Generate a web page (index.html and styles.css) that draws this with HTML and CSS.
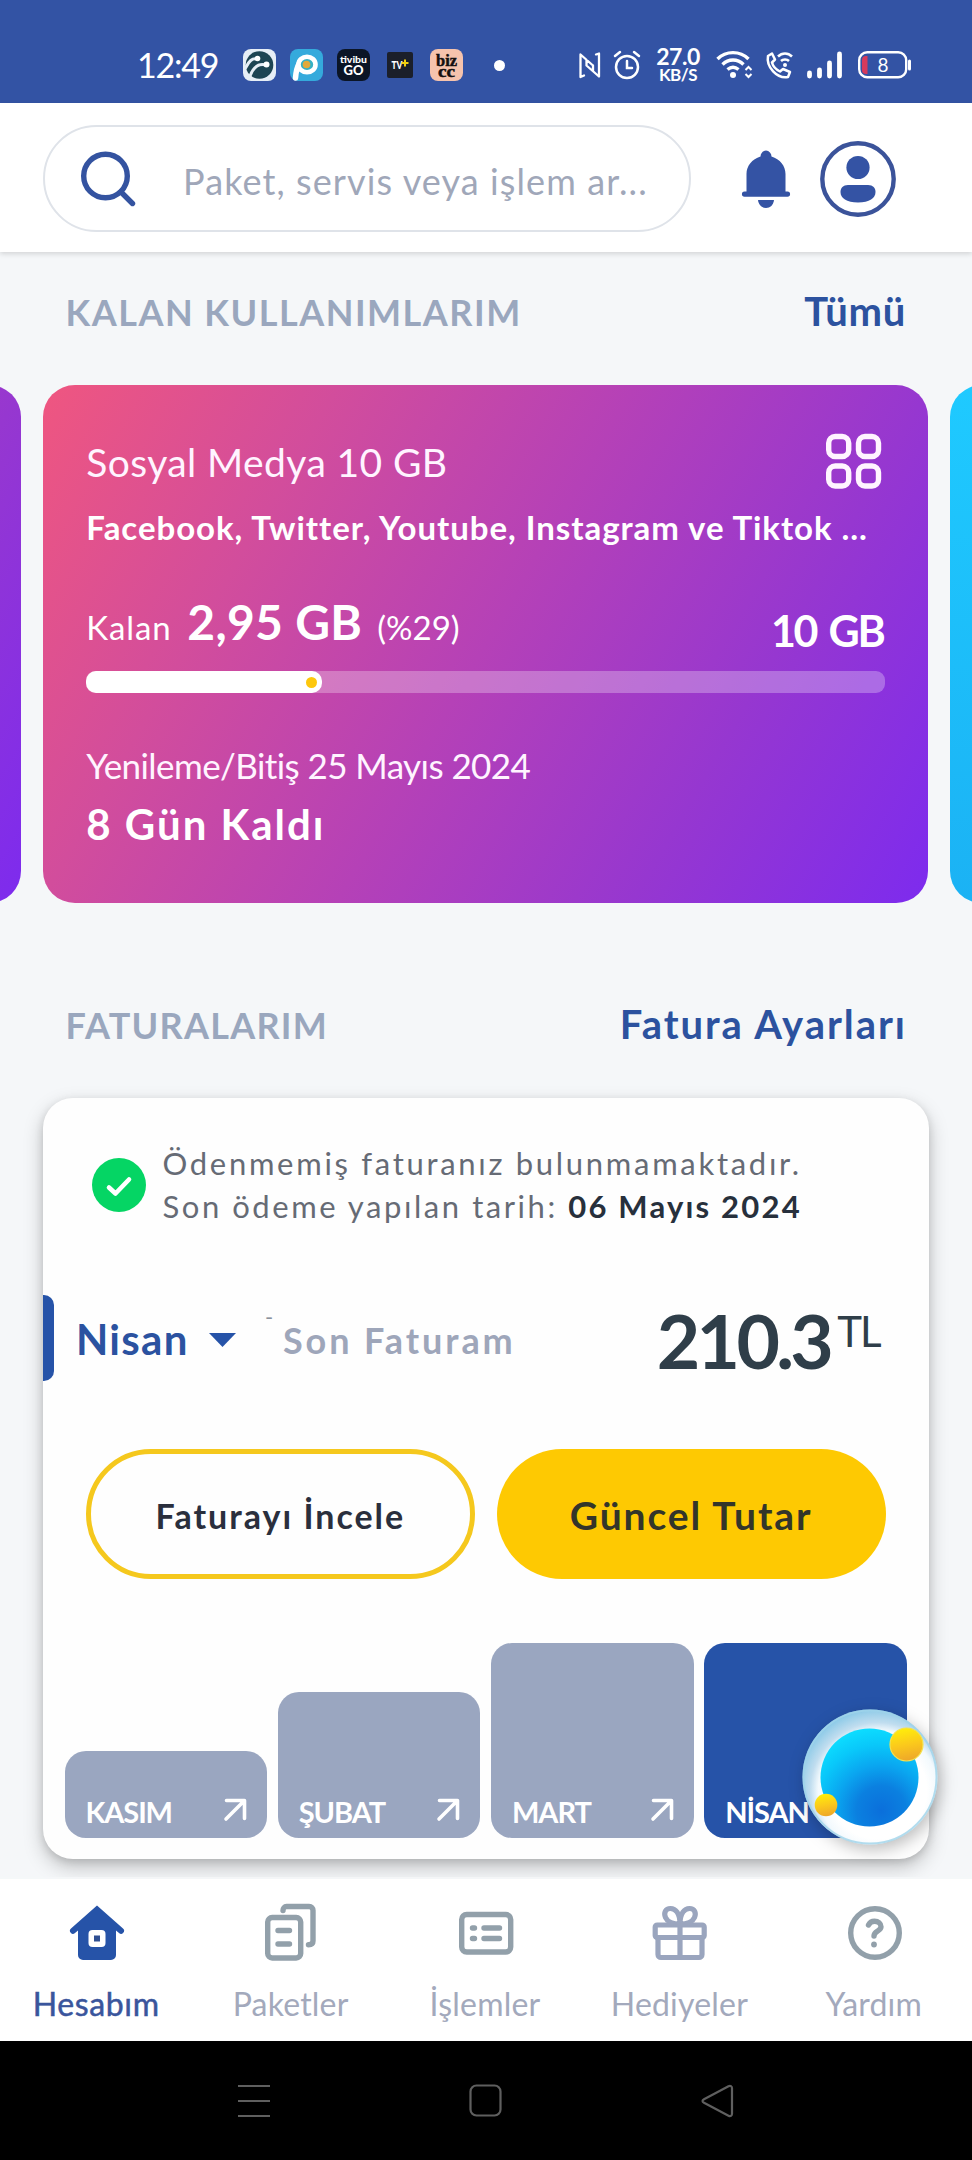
FILE: index.html
```html
<!DOCTYPE html>
<html lang="tr">
<head>
<meta charset="utf-8">
<title>Hesabım</title>
<link rel="stylesheet" href="styles.css">
</head>
<body>
<div class="phone">
  <div class="statusbar">
    <span class="clock">12:49</span>
    <div class="apps">
      <svg width="33" height="32" viewBox="0 0 33 32"><rect width="33" height="32" rx="8" fill="#e6eef6"/><circle cx="16.500" cy="16" r="13.800" fill="#1d4553"/><path d="M2.500 19C6 12 9 9 14 10M7 27C10 19 15 14 23 16" fill="none" stroke="#e6eef6" stroke-width="3" stroke-linecap="round"/><circle cx="14.500" cy="9.500" r="2.800" fill="#fff"/><circle cx="23.500" cy="15.500" r="3" fill="#fff"/></svg>
      <svg width="33" height="32" viewBox="0 0 33 32"><rect width="33" height="32" rx="8" fill="#35aadc"/><path d="M5.500 29C6 22 7 18 9.500 14" fill="none" stroke="#fff" stroke-width="5.500" stroke-linecap="round"/><ellipse cx="17" cy="15.500" rx="8.500" ry="7.800" fill="#35b0c4" stroke="#fff" stroke-width="4.600"/><circle cx="16.500" cy="15.500" r="3.800" fill="#e2a93a"/></svg>
      <svg width="33" height="32" viewBox="0 0 33 32"><rect width="33" height="32" rx="8" fill="#0b1526"/><text class="app-text" x="16.500" y="13.500" font-size="10" textLength="27" lengthAdjust="spacingAndGlyphs">tivibu</text><text class="app-text" x="16.500" y="26" font-size="14" textLength="20" lengthAdjust="spacingAndGlyphs">GO</text></svg>
      <svg width="26" height="26" viewBox="0 0 26 26"><rect width="26" height="26" rx="2" fill="#1b1f2a"/><text class="app-text" x="10" y="17" font-size="10.500" textLength="11" lengthAdjust="spacingAndGlyphs">TV</text><path d="M18 7.500v7M14.500 11h7" stroke="#f2cf10" stroke-width="2"/></svg>
      <svg width="33" height="32" viewBox="0 0 33 32"><rect width="33" height="32" rx="8" fill="#f6c3ad"/><text class="app-text dark" x="16.500" y="17" font-size="17" textLength="21" lengthAdjust="spacingAndGlyphs">biz</text><text class="app-text dark" x="16.500" y="27.500" font-size="17" textLength="17" lengthAdjust="spacingAndGlyphs">cc</text></svg>
    </div>
    <span class="dot"></span>
    <div class="signals">
      <svg width="22" height="28" viewBox="0 0 22 28" fill="none" stroke="#fff" stroke-width="2.300" stroke-linecap="round" stroke-linejoin="round"><path d="M5 24.500L1.500 26V3.500L14 14.500M17 3.500L20 2.500V25.500L7.500 14.500V9M14 14.500V19.500"/></svg>
      <svg width="28" height="30" viewBox="0 0 28 30" fill="none" stroke="#fff" stroke-width="2.500" stroke-linecap="round"><circle cx="14" cy="17" r="11"/><path d="M14 11v7h5M2 6l5-4M26 6l-5-4"/></svg>
      <div class="speed"><span class="speed-num">27.0</span><span class="speed-unit">KB/S</span></div>
      <svg width="38" height="30" viewBox="0 0 38 30" fill="none" stroke="#fff" stroke-width="3.400"><path d="M1.500 9C10 0.500 24 0.500 32.500 9M6.500 14.500C12.500 8.500 21.500 8.500 27.500 14.500M11.500 19.500C15 16.500 19 16.500 22.500 19.500"/><circle cx="17" cy="25" r="3" fill="#fff" stroke="none"/><path d="M29.500 20l3-3 3 3M29.500 24l3 3 3-3" stroke-width="2"/></svg>
      <svg width="28" height="30" viewBox="0 0 28 30" fill="none" stroke="#fff" stroke-width="2.500"><path d="M3 6l4-2.500 3 6-3 3c1 4 4 7 8 9l3-2.500 7 3-2 5C12 29 1 17 3 6z" stroke-linejoin="round"/><path d="M13 6.500C17 2.500 23 2.500 27 6.500M16 11C18 9 22 9 24 11"/><circle cx="20" cy="15" r="2" fill="#fff" stroke="none"/></svg>
      <svg width="36" height="28" viewBox="0 0 36 28" fill="none" stroke="#fff" stroke-width="4.800" stroke-linecap="round"><path d="M2.500 22v3M12.500 19v6M22.500 12v13M32.500 3v22"/></svg>
      <svg width="54" height="28" viewBox="0 0 54 28"><rect x="1.200" y="1.200" width="47" height="25" rx="8" fill="none" stroke="#fff" stroke-width="2.400"/><path d="M9.500 5v18H8a4 4 0 0 1-4-4V9a4 4 0 0 1 4-4z" fill="#d63a5c"/><path d="M51.500 10v8" stroke="#fff" stroke-width="3" stroke-linecap="round"/><text class="batt" x="25" y="20.500">8</text></svg>
    </div>
  </div>

  <header class="topbar">
    <div class="search">
      <svg width="56" height="58" viewBox="0 0 56 58" fill="none" stroke="#3453a0" stroke-width="5.400" stroke-linecap="round"><circle cx="25.500" cy="26" r="21.800"/><path d="M41 42l11.500 11.500"/></svg>
      <span class="placeholder">Paket, servis veya işlem ar...</span>
    </div>
    <svg class="bell" width="50" height="58" viewBox="0 0 50 58" fill="#3453a4"><path d="M25 0.500a6 6 0 0 1 5.500 6C39 9 44.500 16 44.500 24V41.500H46.500a2.600 2.600 0 0 1 0 5.200H3.500a2.600 2.600 0 0 1 0-5.200H5.500V24C5.500 16 11 9 19.500 6.500a6 6 0 0 1 5.500-6z"/><path d="M17 50h16c-.5 5-4 8-8 8s-7.500-3-8-8z"/></svg>
    <svg class="avatar" width="76" height="76" viewBox="0 0 76 76" fill="#3453a4"><circle cx="38" cy="38" r="35.700" fill="none" stroke="#3b539a" stroke-width="4.400"/><circle cx="38" cy="26.500" r="11.600"/><path d="M28 44h20c5 0 7.500 3 7.500 7 0 6-6 10.500-17.500 10.500S20.500 57 20.500 51c0-4 2.500-7 7.500-7z"/></svg>
  </header>

  <main class="content">
    <div class="section-head first">
      <h2 class="section-title kalan">KALAN KULLANIMLARIM</h2>
      <a class="section-link all">Tümü</a>
    </div>
    <div class="carousel">
      <div class="usage"></div>
      <div class="usage">
        <div class="usage-top">
          <span class="usage-title">Sosyal Medya 10 GB</span>
          <svg width="56" height="56" viewBox="0 0 56 56" fill="none" stroke="#fff4ff" stroke-width="5.400"><rect x="2.700" y="3.500" width="20" height="20" rx="6.500"/><rect x="32.500" y="3.500" width="20" height="20" rx="6.500"/><rect x="2.700" y="33" width="20" height="20" rx="6.500"/><rect x="32.500" y="33" width="20" height="20" rx="6.500"/></svg>
        </div>
        <div class="usage-desc">Facebook, Twitter, Youtube, Instagram ve Tiktok ...</div>
        <div class="usage-row">
          <div class="remain"><span class="r-label">Kalan</span><span class="r-value">2,95 GB</span><span class="r-pct">(%29)</span></div>
          <span class="total">10 GB</span>
        </div>
        <div class="track"><div class="fill"><i></i></div></div>
        <div class="renew">Yenileme/Bitiş 25 Mayıs 2024</div>
        <div class="days">8 Gün Kaldı</div>
      </div>
      <div class="usage cyan"></div>
    </div>

    <div class="section-head second">
      <h2 class="section-title bills">FATURALARIM</h2>
      <a class="section-link settings">Fatura Ayarları</a>
    </div>
    <section class="bill">
      <div class="paid">
        <svg width="54" height="54" viewBox="0 0 54 54"><circle cx="27" cy="27" r="27" fill="#05d564"/><path d="M17 29.500l6.500 6L37 21.500" fill="none" stroke="#fff" stroke-width="4.600" stroke-linecap="round" stroke-linejoin="round"/></svg>
        <div class="paid-text"><div class="paid-line first-line">Ödenmemiş faturanız bulunmamaktadır.</div><div class="paid-line">Son ödeme yapılan tarih: <b>06 Mayıs 2024</b></div></div>
      </div>
      <div class="month-row">
        <span class="tab"></span>
        <span class="month">Nisan</span>
        <svg class="caret" width="27" height="14" viewBox="0 0 27 14"><path d="M0 0h27L13.500 14z" fill="#2653a8"/></svg>
        <span class="dash">-</span>
        <span class="last">Son Faturam</span>
        <span class="amount">210.3</span><span class="currency">TL</span>
      </div>
      <div class="buttons">
        <button class="btn outline">Faturayı İncele</button>
        <button class="btn solid">Güncel Tutar</button>
      </div>
      <div class="bars">
        <div class="bar b1"><span>KASIM</span><svg width="24" height="24" viewBox="0 0 24 24"><path d="M3.500 2.500H21.500V20.500M21 3L3 21"/></svg></div>
        <div class="bar b2"><span>ŞUBAT</span><svg width="24" height="24" viewBox="0 0 24 24"><path d="M3.500 2.500H21.500V20.500M21 3L3 21"/></svg></div>
        <div class="bar b3"><span>MART</span><svg width="24" height="24" viewBox="0 0 24 24"><path d="M3.500 2.500H21.500V20.500M21 3L3 21"/></svg></div>
        <div class="bar b4"><span>NİSAN</span></div>
      </div>
    </section>
  </main>

  <svg class="orb" width="160" height="160" viewBox="0 0 160 160">
    <defs>
      <radialGradient id="ring" cx="0.560" cy="0.600" r="0.600"><stop offset="0.600" stop-color="#fff"/><stop offset="0.740" stop-color="#f2f9fd"/><stop offset="0.840" stop-color="#c0ddef"/><stop offset="1" stop-color="#8fcbe8"/></radialGradient>
      <radialGradient id="core" cx="0.620" cy="0.840" r="0.850"><stop offset="0" stop-color="#0b6fdb"/><stop offset="0.300" stop-color="#0b80e0"/><stop offset="0.550" stop-color="#0aa6f0"/><stop offset="0.800" stop-color="#09c8fa"/><stop offset="1" stop-color="#0cdcff"/></radialGradient>
      <linearGradient id="gold" x1="0.400" y1="0" x2="0.600" y2="1"><stop offset="0" stop-color="#ffee0a"/><stop offset="0.500" stop-color="#fbc91c"/><stop offset="1" stop-color="#eda62a"/></linearGradient>
    </defs>
    <circle cx="80" cy="80" r="67.500" fill="url(#ring)"/>
    <circle cx="80" cy="80" r="66.500" fill="none" stroke="#9fd3ea" stroke-opacity="0.800" stroke-width="2"/>
    <circle cx="79.500" cy="80.500" r="49" fill="url(#core)"/>
    <circle cx="116.500" cy="47.500" r="16.500" fill="url(#gold)" stroke="#f5e14e" stroke-width="1.200"/>
    <circle cx="36" cy="108" r="11.300" fill="url(#gold)"/>
  </svg>

  <nav class="tabs">
    <a class="tab-item active"><svg width="60" height="60" viewBox="0 0 60 60" fill="#2653a8"><path d="M30 2.500L56 25.500a3 3 0 0 1-4 4.500L49 27.500V52a5 5 0 0 1-5 5H16a5 5 0 0 1-5-5V27.500L8 30A3 3 0 0 1 4 25.500z"/><rect x="21.500" y="27" width="17" height="17" rx="4" fill="#fff"/><rect x="27" y="32.500" width="6" height="6" fill="#2f4f92"/></svg><span>Hesabım</span></a>
    <a class="tab-item"><svg width="60" height="60" viewBox="0 0 60 60" fill="none" stroke="#92a0aa" stroke-width="5.400" stroke-linecap="round"><rect x="5.700" y="14.500" width="33" height="40.500" rx="4.500"/><path d="M16 27.500h11.500M16 41h11.500M21 7.500c0-2 1.500-4 3.500-4H47c2.500 0 4 1.500 4 4V38c0 2.500-1.500 3.700-4.500 3.700"/></svg><span>Paketler</span></a>
    <a class="tab-item"><svg width="60" height="60" viewBox="0 0 60 60" fill="none" stroke="#92a0aa" stroke-width="5.400" stroke-linecap="round"><rect x="5.700" y="11.500" width="49" height="37.500" rx="5"/><path d="M16.500 25h2M16.500 35.500h2M28 25h15.500M28 35.500h15.500"/></svg><span>İşlemler</span></a>
    <a class="tab-item"><svg width="60" height="60" viewBox="0 0 60 60" fill="none" stroke="#9aa5be" stroke-width="5.200"><rect x="5.200" y="22" width="49" height="12.500" rx="2"/><path d="M8 34V51.500a3 3 0 0 0 3 3H49a3 3 0 0 0 3-3V34M30 20V54M30 21C30 10 25.500 5.500 20.500 5.500S13.500 10 15.500 14.500C17.500 19 23 21 30 21zM30 21C30 10 34.500 5.500 39.500 5.500S46.500 10 44.500 14.500C42.500 19 37 21 30 21z"/></svg><span>Hediyeler</span></a>
    <a class="tab-item"><svg width="60" height="60" viewBox="0 0 60 60" fill="none" stroke="#92a0aa" stroke-width="5.400" stroke-linecap="round" stroke-linejoin="round"><circle cx="30" cy="30" r="24.300"/><path d="M23.500 22c1.500-3 3.500-3.700 6-3.700 3.800 0 6.500 2 6.500 5.500 0 4.500-7 4-7 9.200"/><circle cx="29" cy="41.500" r="2.900" fill="#92a0aa" stroke="none"/></svg><span>Yardım</span></a>
  </nav>

  <div class="sysnav">
    <svg width="34" height="34" viewBox="0 0 34 34"><path d="M1 2h32M1 17h32M1 32h32"/></svg>
    <svg width="34" height="34" viewBox="0 0 34 34"><rect x="1.500" y="1.500" width="30" height="30" rx="6"/></svg>
    <svg width="34" height="34" viewBox="0 0 34 34"><path d="M3 15.200L27.500 2.300c2-1 3.500 0 3.500 2V29.700c0 2-1.500 3-3.500 2L3 18.800c-2-1-2-2.600 0-3.600z"/></svg>
  </div>
</div>
</body>
</html>
```
FILE: styles.css
```css
* { box-sizing: border-box; }
body { margin: 0; font-family: Lato, "Open Sans", sans-serif; background: #f5f7f9; }
svg { display: block; flex: none; }
h2 { margin: 0; font-weight: 700; }
.phone { width: 972px; height: 2160px; position: relative; overflow: hidden; display: flex; flex-direction: column; }

.statusbar { height: 103px; flex: none; background: #3353a4; display: flex; align-items: center; padding: 27px 0 0 137px; color: #fff; }
.clock { width: 106px; font-size: 34px; line-height: 40px; letter-spacing: -1.200px; white-space: nowrap; }
.apps { display: flex; align-items: center; gap: 14px; }
.apps svg:nth-child(4) { margin: 0 3px; }
.app-text { fill: #fff; font-weight: 900; text-anchor: middle; }
.app-text.dark { fill: #141010; stroke: #141010; stroke-width: .5px; font-family: "Liberation Serif", serif; font-weight: 700; }
.dot { width: 11px; height: 11px; border-radius: 50%; background: #fff; margin-left: 31px; }
.signals { display: flex; align-items: center; margin-left: 74px; }
.signals svg:nth-child(2) { margin-left: 12px; }
.speed { width: 42px; margin: 0 17px 0 16px; display: flex; flex-direction: column; align-items: center; font-weight: 700; }
.speed-num { font-size: 23px; line-height: 18px; letter-spacing: -.5px; }
.speed-unit { font-size: 17px; line-height: 19px; letter-spacing: -.5px; }
.signals svg:nth-child(5) { margin-left: 11px; }
.signals svg:nth-child(6) { margin-left: 14px; }
.signals svg:nth-child(7) { margin-left: 15px; }
.batt { fill: #fff; font-size: 19px; text-anchor: middle; }

.topbar { height: 149px; flex: none; background: #fff; display: flex; align-items: center; padding: 2px 0 0 43px; position: relative; box-shadow: 0 2px 5px rgba(0,0,0,.14); }
.search { width: 648px; height: 107px; border: 2.500px solid #dfe3e9; border-radius: 54px; display: flex; align-items: center; padding-left: 35px; }
.placeholder { margin-left: 47px; font-size: 36px; line-height: 50px; letter-spacing: 1.100px; color: #a0a7b9; white-space: nowrap; padding-top: 4px; }
.bell { margin-left: 50px; }
.avatar { margin-left: 29px; }

.content { height: 1627px; flex: none; overflow: hidden; background: #f5f7f9; }
.section-head { display: flex; justify-content: space-between; align-items: baseline; padding: 0 66px 0 65.500px; line-height: 50px; white-space: nowrap; }
.first { height: 133px; padding-top: 34px; }
.second { height: 195px; padding-top: 96px; }
.section-title { font-size: 36px; color: #9aa7be; }
.kalan { letter-spacing: 1.500px; }
.bills { letter-spacing: 1.250px; }
.section-link { font-size: 40px; font-weight: 700; color: #2c529f; }
.all { letter-spacing: .700px; }
.settings { letter-spacing: 1.950px; margin-right: -1px; }

.carousel { display: flex; justify-content: center; gap: 21.500px; margin-right: 1px; }
.usage { flex: none; width: 885.500px; height: 518px; border-radius: 32px; padding: 48px 43.500px 0; color: #fff4ff; white-space: nowrap; background: linear-gradient(120deg, #ef5680 0%, #d24d9c 25%, #b541b7 50%, #9637d0 75%, #7d2bee 100%); }
.cyan { background: linear-gradient(180deg, #1fcaff, #1bb2f4); }
.usage-top { display: flex; justify-content: space-between; padding-right: 3px; }
.usage-title { font-size: 39px; line-height: 58px; letter-spacing: .400px; }
.usage-desc { margin: 14px 0 0 0; font-size: 33px; line-height: 44px; letter-spacing: .950px; font-weight: 700; color: #fff; }
.usage-row { margin-top: 43px; height: 62px; display: flex; justify-content: space-between; color: #fff; }
.remain { display: flex; align-items: baseline; font-size: 33px; line-height: 60px; }
.r-label { width: 101px; letter-spacing: .900px; }
.r-value { width: 190px; font-size: 48px; letter-spacing: .300px; font-weight: 700; }
.total { margin: 14px 1px 0 0; font-size: 43px; line-height: 50px; letter-spacing: -2.200px; word-spacing: 4px; font-weight: 700; }
.track { margin-top: 17px; height: 22px; border-radius: 9px; background: rgba(255,255,255,.28); }
.fill { width: 236px; height: 22px; border-radius: 10px; background: #fff; display: flex; justify-content: flex-end; align-items: center; padding-right: 5px; }
.fill i { width: 11px; height: 11px; border-radius: 50%; background: #fdc70c; }
.renew { margin-top: 49px; font-size: 35px; line-height: 46px; letter-spacing: -.580px; }
.days { margin-top: 9px; font-size: 42px; line-height: 54px; letter-spacing: 2px; font-weight: 700; color: #fff; }

.bill { width: 885.500px; height: 761px; margin-left: 43px; border-radius: 30px; background: #fefefe; padding-top: 44px; box-shadow: 0 8px 20px rgba(0,0,0,.22), 0 3px 8px rgba(0,0,0,.12); white-space: nowrap; }
.paid { display: flex; align-items: center; gap: 17px; padding-left: 48.500px; font-size: 31px; line-height: 43px; letter-spacing: 2.550px; color: #666b75; }
.paid b { color: #27303c; letter-spacing: 2.200px; }
.first-line { letter-spacing: 2.700px; }
.month-row { margin-top: 67px; height: 86px; display: flex; align-items: flex-start; padding-right: 48px; }
.tab { width: 11px; height: 86px; background: #2653a8; border-radius: 0 10px 10px 0; }
.month { width: 133px; margin-left: 22px; font-size: 42px; line-height: 89px; letter-spacing: 1.300px; font-weight: 700; color: #2b52a0; }
.caret { margin-top: 38px; }
.dash { margin-left: 29px; width: 18px; font-size: 22px; line-height: 32px; color: #8a919c; margin-top: 6px; }
.last { font-size: 36px; line-height: 90px; letter-spacing: 2.900px; font-weight: 700; color: #9ea6ba; }
.amount { margin-left: auto; font-size: 75px; line-height: 91px; letter-spacing: -3.700px; font-weight: 700; color: #2f3e49; }
.currency { margin-left: 7px; font-size: 42px; line-height: 73px; letter-spacing: -2px; color: #2f3e49; margin-right: 1px; }
.buttons { margin-top: 68px; display: grid; grid-template-columns: 1fr 1fr; gap: 22px; padding: 0 43px; }
.btn { height: 130px; border-radius: 65px; border: 0; font-family: inherit; font-weight: 700; padding: 2px 0 0; }
.outline { border: 5.500px solid #f5c81d; background: #fefefe; color: #2a2f3d; font-size: 34px; letter-spacing: 2px; }
.solid { background: #fec902; color: #33352a; font-size: 39px; letter-spacing: 1.900px; }
.bars { margin-top: 64px; height: 194.500px; display: flex; align-items: flex-end; gap: 10.600px; padding: 0 21.500px; }
.bar { flex: 1; border-radius: 21px; background: #9aa6c0; display: flex; align-items: flex-end; justify-content: space-between; padding: 0 20px 8px 21px; font-size: 29px; line-height: 36px; letter-spacing: -1.100px; font-weight: 700; color: #fff; }
.bar svg { fill: none; stroke: #fff; stroke-width: 3.600; stroke-linecap: round; stroke-linejoin: round; margin-bottom: 8px; }
.b1 { height: 86.500px; }
.b2 { height: 145.500px; }
.b3 { height: 194.500px; }
.b4 { height: 194.500px; background: #2653a8; }

.orb { position: absolute; left: 789.500px; top: 1696.500px; filter: drop-shadow(3px 5px 8px rgba(0,0,0,.25)); }

.tabs { height: 162px; flex: none; background: #fff; display: grid; grid-template-columns: repeat(5, 1fr); box-shadow: 0 -2px 0 rgba(245,247,249,.8); position: relative; }
.tab-item { display: flex; flex-direction: column; align-items: center; padding-top: 24px; font-size: 32px; line-height: 44px; letter-spacing: .200px; color: #a3a9bc; }
.tab-item span { margin: 19px 2px 0 0; white-space: nowrap; }
.active { color: #3a559c; }
.active span { -webkit-text-stroke: .5px #3a559c; letter-spacing: .600px; }
.sysnav { height: 119px; flex: none; background: #000; display: flex; justify-content: center; gap: 198px; padding-top: 43px; }
.sysnav svg { fill: none; stroke: #5f5f5f; stroke-width: 2.200; }
```
